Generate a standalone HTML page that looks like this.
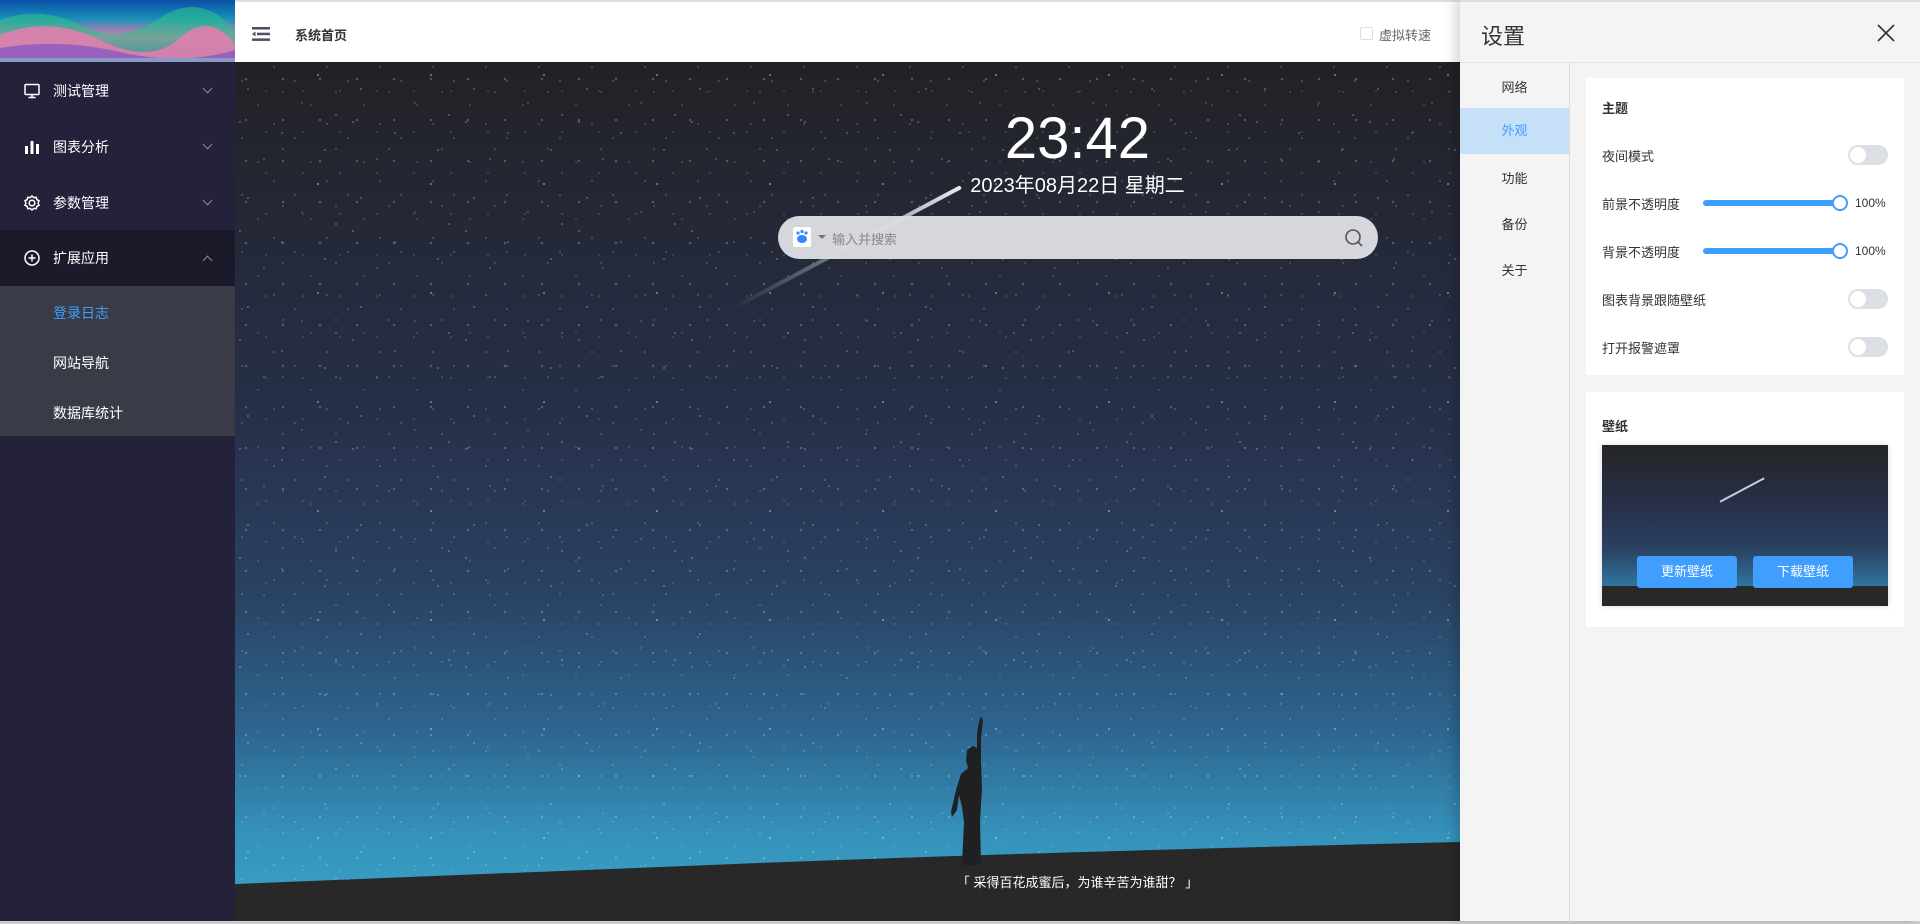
<!DOCTYPE html>
<html><head><meta charset="utf-8">
<style>
*{margin:0;padding:0;box-sizing:border-box}
body{width:1920px;height:924px;overflow:hidden;font-family:"Liberation Sans","Noto Sans CJK SC",sans-serif;background:#f4f4f4;position:relative}
.abs{position:absolute}
#side{left:0;top:0;width:235px;height:924px;background:#23223a}
#logo{left:0;top:0;width:235px;height:62px;background:linear-gradient(180deg,#0a4fa8 0%,#1890b8 30%,#e87ab0 60%,#9a5ab8 85%,#7a90b8 100%)}
.mi{position:absolute;left:0;width:235px;height:56px;color:#fff;font-size:14px;line-height:56px}
.mi .t{position:absolute;left:53px}
.mi .ic{position:absolute;left:24px;top:20px;width:16px;height:16px}
.mi .ch{position:absolute;left:204px;top:22px;width:7px;height:7px;border-right:1px solid #8a8a9a;border-bottom:1px solid #8a8a9a;transform:rotate(45deg)}
.si{position:absolute;left:53px;font-size:14px;color:#fff}
#main{left:235px;top:62px;width:1685px;height:859px;overflow:hidden;
background:linear-gradient(180deg,#222225 0%,#242836 18%,#27304a 42%,#2a4262 62%,#2d6690 78%,#3592bb 90%,#3aa3c8 100%)}
.stars{position:absolute;inset:0;
background-image:radial-gradient(1px 1px at 13px 27px,#fff,transparent),radial-gradient(1px 1px at 47px 71px,#dde,transparent),radial-gradient(1.3px 1.3px at 83px 13px,#fff,transparent),radial-gradient(1px 1px at 29px 97px,#ccd,transparent),radial-gradient(1px 1px at 101px 53px,#fff,transparent),radial-gradient(1px 1px at 67px 41px,#bbc,transparent),radial-gradient(1px 1px at 5px 60px,#fff,transparent),radial-gradient(1px 1px at 90px 88px,#fff,transparent);
background-size:113px 109px;opacity:.8}
.stars2{position:absolute;inset:0;background-image:radial-gradient(1px 1px at 7px 19px,#fff,transparent),radial-gradient(1px 1px at 39px 5px,#fff,transparent),radial-gradient(1px 1px at 23px 43px,#ccd,transparent),radial-gradient(1px 1px at 48px 30px,#eef,transparent);background-size:53px 57px;opacity:.6}
.stars3{position:absolute;inset:0;background-image:radial-gradient(1.5px 1.5px at 11px 17px,#fff,transparent),radial-gradient(1px 1px at 31px 29px,#fff,transparent);background-size:37px 41px;opacity:.45}
#hdr{left:235px;top:0;width:1225px;height:62px;background:#fff;border-top:2px solid #ddd}
#panel{left:1460px;top:0;width:460px;height:921px;background:#f4f4f4;box-shadow:-6px 0 10px rgba(0,0,0,.15);border-top:2px solid #ddd}
.nav{position:absolute;left:0;width:109px;text-align:center;font-size:13px;color:#333}
.card{position:absolute;left:126px;width:318px;background:#fff}
.lbl{position:absolute;left:16px;font-size:13px;color:#333}
.tg{position:absolute;left:262px;width:40px;height:20px;border-radius:10px;background:#dcdfe6}
.tg:after{content:"";position:absolute;left:2px;top:2px;width:16px;height:16px;border-radius:50%;background:#fff}
.sl{position:absolute;left:117px;width:138px;height:6px;border-radius:3px;background:#409eff}
.sl:after{content:"";position:absolute;right:-7px;top:-5px;width:12px;height:12px;border-radius:50%;background:#fff;border:2px solid #409eff}
.pc{position:absolute;left:269px;font-size:12px;color:#333}
.btn{position:absolute;width:100px;height:32px;background:#409eff;border-radius:3px;color:#fff;font-size:13px;text-align:center;line-height:32px}
</style></head><body>
<div id="side" class="abs">
<div id="logo" class="abs"><svg width="235" height="62" style="position:absolute;left:0;top:0"><path d="M0 20 Q40 5 80 25 T160 18 T235 30 V62 H0Z" fill="#2cc08a" opacity=".6"/><path d="M0 35 Q50 15 100 40 T180 38 T235 45 V62 H0Z" fill="#f07ab0" opacity=".8"/><path d="M0 48 Q60 38 120 52 T235 50 V62 H0Z" fill="#8a5ac0" opacity=".8"/><path d="M0 58 H235 V62 H0Z" fill="#8a9ac8"/></svg></div>
<div class="mi" style="top:63px"><svg class="ic" viewBox="0 0 16 16" fill="none" stroke="#fff" stroke-width="1.5"><rect x="1" y="1.5" width="14" height="10" rx="1"/><path d="M8 11.5v3M4.5 14.5h7"/></svg><span class="t">测试管理</span><span class="ch"></span></div>
<div class="mi" style="top:119px"><svg class="ic" viewBox="0 0 16 16" fill="#fff"><rect x="1" y="7" width="3" height="8"/><rect x="6.5" y="2" width="3" height="13"/><rect x="12" y="5" width="3" height="10"/></svg><span class="t">图表分析</span><span class="ch"></span></div>
<div class="mi" style="top:175px"><svg class="ic" viewBox="0 0 16 16" fill="none" stroke="#fff" stroke-width="1.5"><circle cx="8" cy="8" r="2.8"/><path d="M8 1l1.8 1.6 2.4-.3.6 2.3 2.2 1.1-.9 2.3.9 2.3-2.2 1.1-.6 2.3-2.4-.3L8 15l-1.8-1.6-2.4.3-.6-2.3-2.2-1.1.9-2.3-.9-2.3 2.2-1.1.6-2.3 2.4.3z"/></svg><span class="t">参数管理</span><span class="ch"></span></div>
<div class="mi" style="top:230px;background:#1b1a2a"><svg class="ic" viewBox="0 0 16 16" fill="none" stroke="#fff" stroke-width="1.5"><circle cx="8" cy="8" r="7"/><path d="M8 4.5v7M4.5 8h7"/></svg><span class="t">扩展应用</span><span class="ch" style="transform:rotate(225deg);top:27px"></span></div>
<div class="abs" style="left:0;top:286px;width:235px;height:150px;background:#393c46">
<div class="si" style="top:17px;color:#409eff">登录日志</div>
<div class="si" style="top:67px">网站导航</div>
<div class="si" style="top:117px">数据库统计</div>
</div>
</div>
<div id="main" class="abs">
<div class="stars"></div><div class="stars2"></div><div class="stars3"></div>
<div class="abs" style="left:466px;top:123px;width:260px;height:4px;background:linear-gradient(90deg,transparent,rgba(200,215,230,.5) 50%,rgba(240,245,250,.95));transform:rotate(-28deg);transform-origin:right center;border-radius:2px"></div>
<svg class="abs" style="left:0;top:0" width="1685" height="859"><path d="M0 822 Q250 812 500 802 Q800 790 1225 780 L1685 775 V859 H0Z" fill="#282828"/>
<path d="M727 803 L729 760 L727 745 L724 733 L722 748 L717 755 L716 750 L721 728 L726 712 L733 706 L731 698 L732 688 L738 684 L742 686 L742 672 L744 660 L746 654 L748 658 L746 676 L746 700 L747 725 L745 760 L746 803 Z" fill="#202022"/></svg>
<div class="abs" style="left:0;width:1685px;top:43px;text-align:center;color:#fff;font-size:58px;font-family:'Liberation Sans',sans-serif">23:42</div>
<div class="abs" style="left:0;width:1685px;top:107px;text-align:center;color:#fff;font-size:20px">2023年08月22日 星期二</div>
<div class="abs" style="left:543px;top:154px;width:600px;height:43px;border-radius:22px;background:rgba(220,221,226,.97)">
<div style="position:absolute;left:15px;top:11px;width:18px;height:20px;background:#fff;border-radius:2px"><svg width="18" height="20" viewBox="0 0 18 20"><circle cx="5" cy="6" r="1.6" fill="#3388ff"/><circle cx="9" cy="4.5" r="1.6" fill="#3388ff"/><circle cx="13" cy="6" r="1.6" fill="#3388ff"/><ellipse cx="9" cy="12" rx="5" ry="4" fill="#3388ff"/></svg></div>
<div style="position:absolute;left:40px;top:19px;border:4px solid transparent;border-top-color:#777"></div>
<div style="position:absolute;left:54px;top:13px;font-size:13px;color:#888">输入并搜索</div>
<svg style="position:absolute;left:566px;top:12px" width="20" height="20" viewBox="0 0 20 20" fill="none" stroke="#555" stroke-width="1.6"><circle cx="9" cy="9" r="7"/><path d="M14 14l4 4"/></svg>
</div>
<div class="abs" style="left:0;width:1685px;top:810px;text-align:center;color:#fff;font-size:13px">「 采得百花成蜜后，为谁辛苦为谁甜？ 」</div>
</div>
<div id="hdr" class="abs">
<svg style="position:absolute;left:17px;top:25px" width="18" height="14" viewBox="0 0 18 14" fill="#4a5060"><rect x="0" y="0" width="18" height="2.5"/><rect x="5" y="5.7" width="13" height="2.5"/><rect x="0" y="11.4" width="18" height="2.5"/><path d="M0 7l3.5-2.5v5z"/></svg>
<div style="position:absolute;left:60px;top:23px;font-size:13px;font-weight:bold;color:#333">系统首页</div>
<div style="position:absolute;left:1125px;top:25px;width:13px;height:13px;border:1px solid #dcdfe6;border-radius:2px"></div>
<div style="position:absolute;left:1144px;top:23px;font-size:13px;color:#666">虚拟转速</div>
</div>
<div class="abs" style="left:0;top:921px;width:1920px;height:3px;background:#ccc"></div>
<div id="panel" class="abs">
<div style="position:absolute;left:21px;top:17px;font-size:22px;color:#333">设置</div>
<svg style="position:absolute;left:417px;top:22px" width="18" height="18" viewBox="0 0 18 18" stroke="#333" stroke-width="1.6"><path d="M1 1l16 16M17 1L1 17"/></svg>
<div style="position:absolute;left:0;top:60px;width:460px;height:1px;background:#e4e4e4"></div>
<div style="position:absolute;left:109px;top:60px;width:1px;height:861px;background:#ddd"></div>
<div class="nav" style="top:75px">网络</div>
<div class="nav" style="top:106px;height:46px;line-height:46px;background:#c6e0f8;color:#409eff">外观</div>
<div class="nav" style="top:166px">功能</div>
<div class="nav" style="top:212px">备份</div>
<div class="nav" style="top:258px">关于</div>
<div class="card" style="top:76px;height:297px">
<div class="lbl" style="top:20px;font-weight:bold">主题</div>
<div class="lbl" style="top:68px">夜间模式</div><div class="tg" style="top:67px"></div>
<div class="lbl" style="top:116px">前景不透明度</div><div class="sl" style="top:122px"></div><div class="pc" style="top:118px">100%</div>
<div class="lbl" style="top:164px">背景不透明度</div><div class="sl" style="top:170px"></div><div class="pc" style="top:166px">100%</div>
<div class="lbl" style="top:212px">图表背景跟随壁纸</div><div class="tg" style="top:211px"></div>
<div class="lbl" style="top:260px">打开报警遮罩</div><div class="tg" style="top:259px"></div>
</div>
<div class="card" style="top:390px;height:235px">
<div class="lbl" style="top:24px;font-weight:bold">壁纸</div>
<div style="position:absolute;left:16px;top:53px;width:286px;height:161px;box-shadow:0 0 6px rgba(0,0,0,.15);background:linear-gradient(180deg,#252527 0%,#28304a 40%,#2a4262 65%,#2f6f9a 85%,#3a9ac0 100%);overflow:hidden">
<div style="position:absolute;left:0;bottom:0;width:286px;height:20px;background:#282828"></div>
<div style="position:absolute;left:115px;top:44px;width:50px;height:1.5px;background:#ccd;transform:rotate(-28deg)"></div>
<div class="btn" style="left:35px;top:111px">更新壁纸</div>
<div class="btn" style="left:151px;top:111px">下载壁纸</div>
</div>
</div>
</div>
</body></html>
